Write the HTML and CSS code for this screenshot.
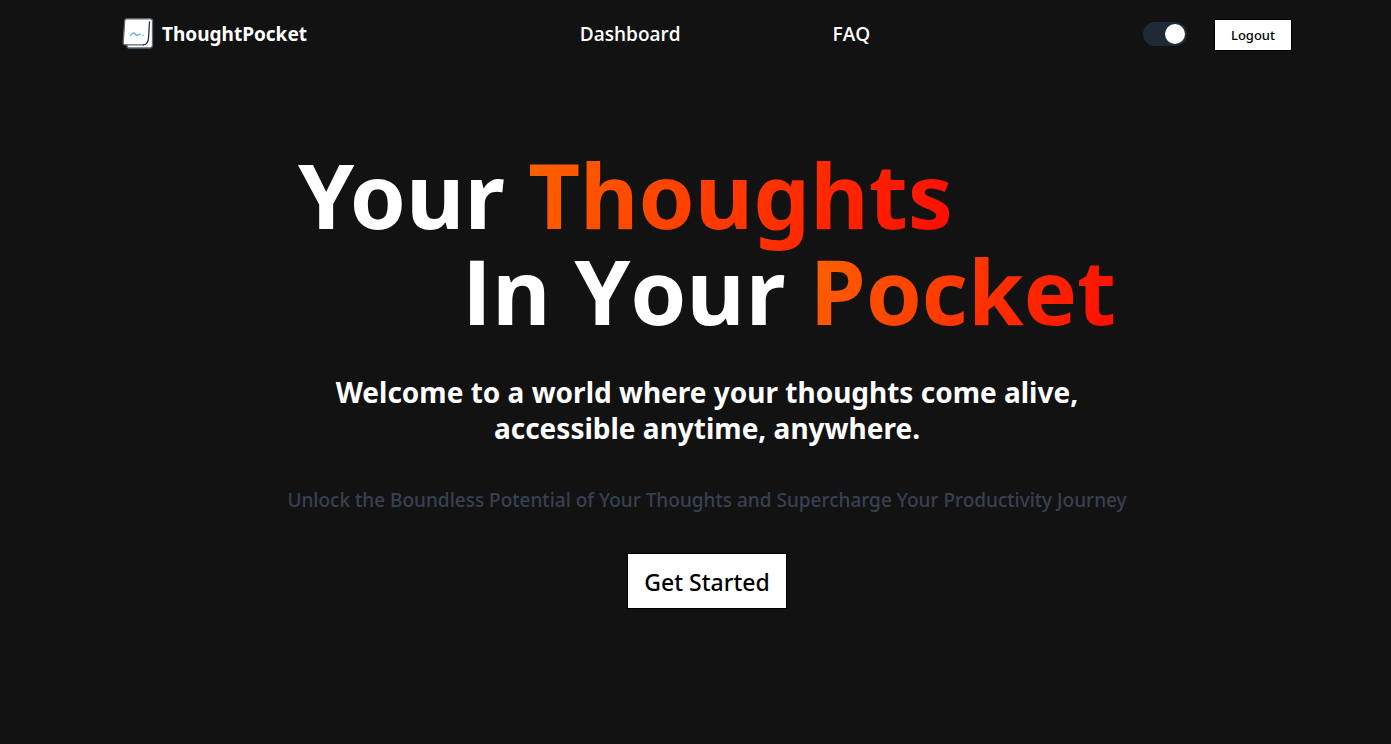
FILE: index.html
```html
<!DOCTYPE html>
<html lang="en">
<head>
<meta charset="utf-8">
<meta name="viewport" content="width=device-width, initial-scale=1">
<title>ThoughtPocket</title>
<link rel="stylesheet" href="styles.css">
</head>
<body>
<header class="navbar">
  <a class="brand" href="#">
    <svg class="brand-icon" viewBox="0 0 32 32" aria-hidden="true">
      <path d="M5 26V27.500Q5 30 7 30H28Q30.500 30 30.500 27V2.500Q30.500 .8 28 .8H26" fill="#fff" stroke="#5b6570" stroke-width="1.300"/>
      <path d="M4.500 .8H28Q28.600 .8 28.400 3L27 22Q26.500 26.800 23 26.800H3Q1 26.800 1.200 24.500L2.700 2.500Q2.900 .8 4.500 .8Z" fill="#fff"/>
      <path d="M28 .8H4.500Q2.900 .8 2.700 2.500L1.200 24.500Q1 26.800 3 26.800H22" fill="none" stroke="#5b6570" stroke-width="1.300"/>
      <path d="M27.500 4L26.600 19Q26.300 26.500 21.500 26.800" fill="none" stroke="#2b323a" stroke-width="1.300" stroke-linecap="round"/>
      <path d="M8.500 17.500Q10.800 13.500 13 16T18.200 16" fill="none" stroke="#63b0f1" stroke-width="1.500" stroke-linecap="round"/>
      <circle cx="21" cy="17.300" r=".9" fill="#7abcf4"/>
    </svg>
    <span>ThoughtPocket</span>
  </a>
  <nav class="links">
    <a href="#">Dashboard</a>
    <a href="#">FAQ</a>
  </nav>
  <div class="actions">
    <input class="switch" type="checkbox" role="switch" aria-label="Dark mode" checked>
    <button class="logout" type="button">Logout</button>
  </div>
</header>
<main class="hero">
  <h1 class="title">
    <span class="line">Your <span class="accent">Thoughts</span></span>
    <span class="line line-end">In Your <span class="accent">Pocket</span></span>
  </h1>
  <h2 class="subtitle">Welcome to a world where your thoughts come alive,<br>accessible anytime, anywhere.</h2>
  <p class="tagline">Unlock the Boundless Potential of Your Thoughts and Supercharge Your Productivity Journey</p>
  <button class="start" type="button">Get Started</button>
</main>
</body>
</html>
```
FILE: styles.css
```css
* { box-sizing: border-box; }

body {
  margin: 0;
  padding-left: 23px;
  min-height: 100vh;
  background: #121212;
  color: #fff;
  font-family: "Segoe UI", "Noto Sans", "Open Sans", sans-serif;
}

a { color: inherit; text-decoration: none; }

button {
  font-family: inherit;
  font-weight: 500;
  color: #000;
  background: #fff;
  border: 1px solid #000;
  cursor: pointer;
}

.navbar {
  display: flex;
  justify-content: space-between;
  align-items: center;
  min-height: 68px;
  padding: 0 99px;
}

.brand {
  display: flex;
  align-items: center;
  gap: 8px;
  font-size: 19px;
  font-weight: 700;
}

.brand-icon { width: 32px; height: 32px; }

.links {
  display: flex;
  gap: 152px;
  font-family: "Segoe UI", "Open Sans", sans-serif;
  font-size: 19px;
  font-weight: 600;
}

.actions {
  display: flex;
  align-items: center;
  justify-content: flex-end;
  gap: 27px;
}

.switch {
  appearance: none;
  display: flex;
  align-items: center;
  justify-content: flex-end;
  width: 44px;
  height: 24px;
  margin: 0;
  padding: 2px;
  border-radius: 12px;
  background: #1f2937;
  cursor: pointer;
}

.switch::before {
  content: "";
  width: 20px;
  height: 20px;
  border-radius: 50%;
  background: #fff;
}

.logout {
  margin-top: 2px;
  padding: 5px 16px;
  font-size: 13px;
  line-height: 20px;
}

.hero {
  display: flex;
  flex-direction: column;
  align-items: center;
  padding-top: 78px;
  text-align: center;
}

.title {
  display: flex;
  flex-direction: column;
  margin: 0;
  font-size: 90px;
  line-height: 96px;
  font-weight: 700;
  text-align: left;
}

.line-end {
  padding-left: 164px;
  font-family: "Segoe UI", "Open Sans", sans-serif;
}

.accent {
  background: linear-gradient(110deg, #ff6200, #ff0c00);
  background-clip: text;
  -webkit-background-clip: text;
  color: transparent;
}

.subtitle {
  margin: 36px 0 0;
  font-size: 28px;
  line-height: 36px;
  font-weight: 700;
}

.tagline {
  margin: 40px 0 0;
  font-size: 19px;
  line-height: 28px;
  font-weight: 500;
  color: #374151;
}

.start {
  margin-top: 39px;
  padding: 11px 16px 9px;
  font-size: 23px;
  line-height: 34px;
}
```
